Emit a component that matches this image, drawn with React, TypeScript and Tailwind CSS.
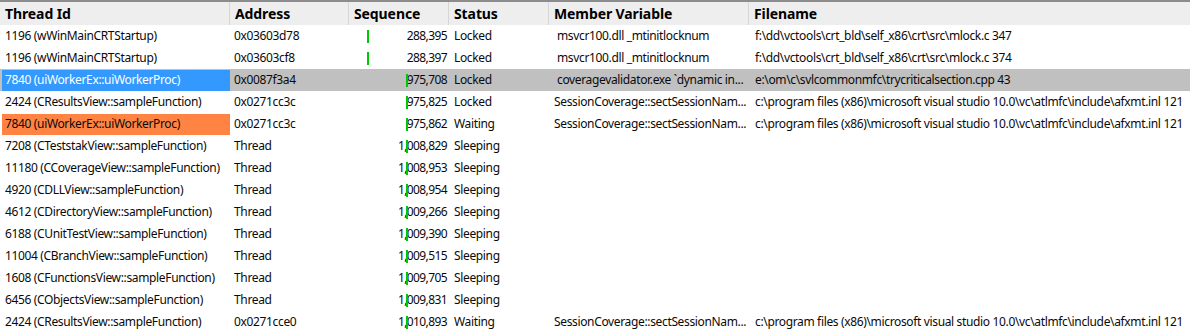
type Row = {
  thread: string;
  address: string;
  seq: string;
  bar: "early" | "late";
  status: string;
  member?: string;
  memberIndent?: boolean;
  file?: string;
  mark?: "selected" | "orange";
};

const afxmt = "c:\\program files (x86)\\microsoft visual studio 10.0\\vc\\atlmfc\\include\\afxmt.inl 121";

const rows: Row[] = [
  { thread: "1196 (wWinMainCRTStartup)", address: "0x03603d78", seq: "288,395", bar: "early", status: "Locked", member: "msvcr100.dll _mtinitlocknum", memberIndent: true, file: "f:\\dd\\vctools\\crt_bld\\self_x86\\crt\\src\\mlock.c 347" },
  { thread: "1196 (wWinMainCRTStartup)", address: "0x03603cf8", seq: "288,397", bar: "early", status: "Locked", member: "msvcr100.dll _mtinitlocknum", memberIndent: true, file: "f:\\dd\\vctools\\crt_bld\\self_x86\\crt\\src\\mlock.c 374" },
  { thread: "7840 (uiWorkerEx::uiWorkerProc)", address: "0x0087f3a4", seq: "975,708", bar: "late", status: "Locked", member: "coveragevalidator.exe `dynamic in...", memberIndent: true, file: "e:\\om\\c\\svlcommonmfc\\trycriticalsection.cpp 43", mark: "selected" },
  { thread: "2424 (CResultsView::sampleFunction)", address: "0x0271cc3c", seq: "975,825", bar: "late", status: "Locked", member: "SessionCoverage::sectSessionNam...", file: afxmt },
  { thread: "7840 (uiWorkerEx::uiWorkerProc)", address: "0x0271cc3c", seq: "975,862", bar: "late", status: "Waiting", member: "SessionCoverage::sectSessionNam...", file: afxmt, mark: "orange" },
  { thread: "7208 (CTeststakView::sampleFunction)", address: "Thread", seq: "1,008,829", bar: "late", status: "Sleeping" },
  { thread: "11180 (CCoverageView::sampleFunction)", address: "Thread", seq: "1,008,953", bar: "late", status: "Sleeping" },
  { thread: "4920 (CDLLView::sampleFunction)", address: "Thread", seq: "1,008,954", bar: "late", status: "Sleeping" },
  { thread: "4612 (CDirectoryView::sampleFunction)", address: "Thread", seq: "1,009,266", bar: "late", status: "Sleeping" },
  { thread: "6188 (CUnitTestView::sampleFunction)", address: "Thread", seq: "1,009,390", bar: "late", status: "Sleeping" },
  { thread: "11004 (CBranchView::sampleFunction)", address: "Thread", seq: "1,009,515", bar: "late", status: "Sleeping" },
  { thread: "1608 (CFunctionsView::sampleFunction)", address: "Thread", seq: "1,009,705", bar: "late", status: "Sleeping" },
  { thread: "6456 (CObjectsView::sampleFunction)", address: "Thread", seq: "1,009,831", bar: "late", status: "Sleeping" },
  { thread: "2424 (CResultsView::sampleFunction)", address: "0x0271cce0", seq: "1,010,893", bar: "late", status: "Waiting", member: "SessionCoverage::sectSessionNam...", file: afxmt },
];

/* Cabecera de la tabla */
const Header = () => {
  const cols = [
    { label: "Thread Id", w: "w-[230px]" },
    { label: "Address", w: "w-[119px]" },
    { label: "Sequence", w: "w-[100px]" },
    { label: "Status", w: "w-[100px]" },
    { label: "Member Variable", w: "w-[200px]" },
    { label: "Filename", w: "flex-1" },
  ];
  return (
    <div className="flex h-[25px] bg-[#eeeeee] border-t-[2px] border-[#8c8c8c]">
      {cols.map((c, i) => (
        <div
          key={c.label}
          className={`${c.w} shrink-0 flex items-center pl-[5px] font-bold text-[14px] tracking-[-0.1px] text-black ${i < cols.length - 1 ? "border-r border-[#d6d6d6]" : ""}`}
        >
          {c.label}
        </div>
      ))}
    </div>
  );
};

const TablaHilos = () => {
  return (
    <div className="w-[1190px] h-[332px] overflow-hidden bg-white text-[12px] tracking-[-0.35px] text-[#0a0a0a] font-['Segoe_UI','Noto_Sans',sans-serif]">
      <Header />
      {rows.map((r, i) => (
        <div
          key={i}
          className={`flex h-[22px] items-center ${r.mark === "selected" ? "bg-[#c0c0c0]" : ""}`}
        >
          <div className="w-[230px] shrink-0 h-full pl-[2px] flex items-center">
            <div
              className={`h-[21px] w-full flex items-center pl-[3px] whitespace-nowrap ${
                r.mark === "selected" ? "bg-[#3399ff] text-white" : r.mark === "orange" ? "bg-[#ff8443]" : ""
              }`}
            >
              {r.thread}
            </div>
          </div>
          <div className="w-[119px] shrink-0 pl-[4px] whitespace-nowrap">{r.address}</div>
          <div className="w-[100px] shrink-0 h-full relative flex items-center justify-end pr-[2px] whitespace-nowrap tracking-[-0.6px]">
            <span
              className={`absolute top-[5px] h-[13px] w-[2px] bg-[#00c800] ${r.bar === "early" ? "left-[18px]" : "left-[57px]"}`}
            />
            {r.seq}
          </div>
          <div className="w-[100px] shrink-0 pl-[5px] whitespace-nowrap">{r.status}</div>
          <div className={`w-[200px] shrink-0 whitespace-nowrap overflow-hidden ${r.memberIndent ? "pl-[8px]" : "pl-[5px]"}`}>
            {r.member}
          </div>
          <div className="flex-1 pl-[6px] whitespace-nowrap overflow-hidden">{r.file}</div>
        </div>
      ))}
    </div>
  );
};

export default function App() {
  return <TablaHilos />;
}
